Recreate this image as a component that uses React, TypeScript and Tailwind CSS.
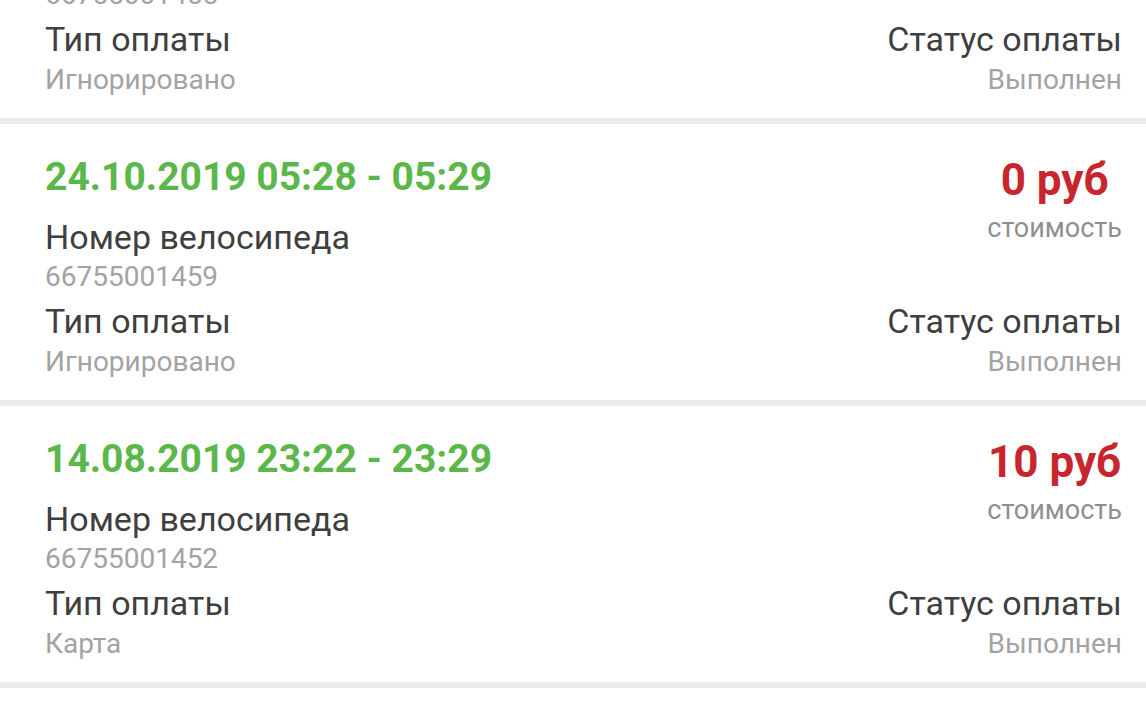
import React from "react";

type Ride = {
    id: number;
    date: string;
    price: string;
    bike: string;
    payType: string;
    status: string;
};

const rides: Ride[] = [
    {
        id: 1,
        date: "24.10.2019 05:30 - 05:31",
        price: "0 руб",
        bike: "66755001455",
        payType: "Игнорировано",
        status: "Выполнен",
    },
    {
        id: 2,
        date: "24.10.2019 05:28 - 05:29",
        price: "0 руб",
        bike: "66755001459",
        payType: "Игнорировано",
        status: "Выполнен",
    },
    {
        id: 3,
        date: "14.08.2019 23:22 - 23:29",
        price: "10 руб",
        bike: "66755001452",
        payType: "Карта",
        status: "Выполнен",
    },
    {
        id: 4,
        date: "02.08.2019 18:10 - 18:24",
        price: "20 руб",
        bike: "66755001447",
        payType: "Карта",
        status: "Выполнен",
    },
];

const RideCard = ({ ride }: { ride: Ride }) => {
    return (
        <div className="bg-white">
            <div className="h-[6px] bg-[#ebebeb]" />
            <div className="pl-[45px] pr-[24px] pt-[29px] h-[276px]">
                <div className="flex justify-between items-start">
                    <div className="flex flex-col">
                        <div className="text-[39px] leading-[48px] font-bold text-[#5cb74a]">
                            {ride.date}
                        </div>
                        <div className="mt-[16px] text-[34px] leading-[40px] text-[#3f3f3f]">
                            Номер велосипеда
                        </div>
                        <div className="mt-[2px] text-[28px] leading-[36px] text-[#a3a3a3]">
                            {ride.bike}
                        </div>
                    </div>
                    <div className="flex flex-col items-center mt-[3px]">
                        <div className="text-[44px] leading-[48px] font-bold text-[#c8262d]">
                            {ride.price}
                        </div>
                        <div className="mt-[8px] text-[27px] leading-[32px] text-[#8f8f8f]">
                            стоимость
                        </div>
                    </div>
                </div>
                <div className="flex justify-between items-start mt-[6px]">
                    <div className="flex flex-col">
                        <div className="text-[34px] leading-[40px] text-[#3f3f3f]">
                            Тип оплаты
                        </div>
                        <div className="mt-[3px] text-[28px] leading-[36px] text-[#a3a3a3]">
                            {ride.payType}
                        </div>
                    </div>
                    <div className="flex flex-col items-end">
                        <div className="text-[34px] leading-[40px] text-[#3f3f3f]">
                            Статус оплаты
                        </div>
                        <div className="mt-[3px] text-[28px] leading-[36px] text-[#a3a3a3]">
                            {ride.status}
                        </div>
                    </div>
                </div>
            </div>
        </div>
    );
};

const App = () => {
    return (
        <div className="h-[716px] w-[1146px] overflow-hidden bg-white font-['Roboto',sans-serif]">
            <div className="-mt-[164px]">
                {rides.map((ride) => (
                    <RideCard key={ride.id} ride={ride} />
                ))}
            </div>
        </div>
    );
};

export default App;
